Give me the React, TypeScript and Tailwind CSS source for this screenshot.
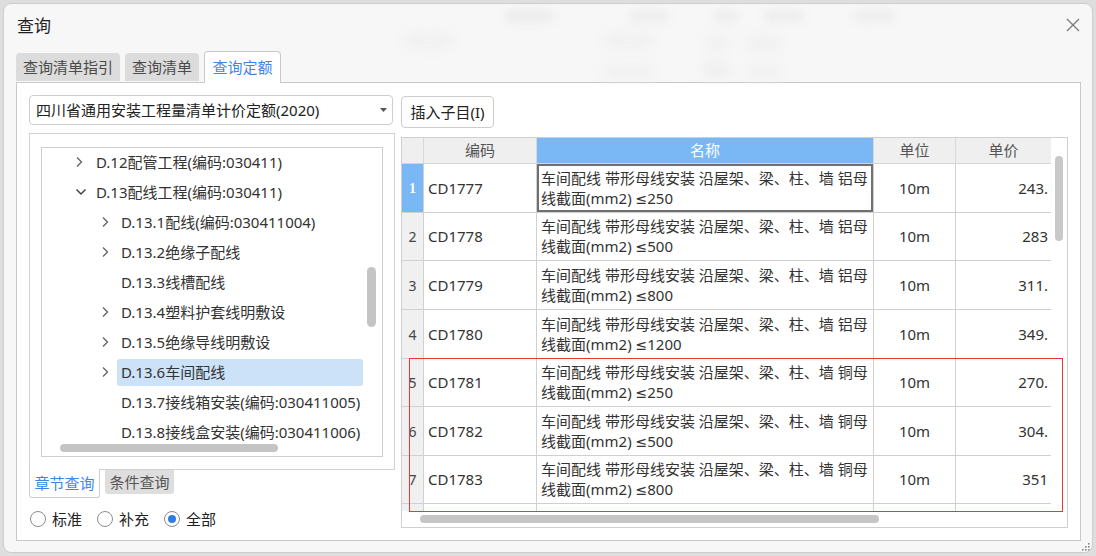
import React from "react";

const ChevronRight = () => (
  <svg width="8" height="12" viewBox="0 0 8 12">
    <path d="M2 1.5 L6.5 6 L2 10.5" fill="none" stroke="#666" strokeWidth="1.4" />
  </svg>
);
const ChevronDown = () => (
  <svg width="12" height="8" viewBox="0 0 12 8">
    <path d="M1.5 1.5 L6 6 L10.5 1.5" fill="none" stroke="#444" strokeWidth="1.5" />
  </svg>
);

type TreeItem = { label: string; level: 1 | 2; icon: "right" | "down" | "none"; selected?: boolean };

const tree: TreeItem[] = [
  { label: "D.12配管工程(编码:030411)", level: 1, icon: "right" },
  { label: "D.13配线工程(编码:030411)", level: 1, icon: "down" },
  { label: "D.13.1配线(编码:030411004)", level: 2, icon: "right" },
  { label: "D.13.2绝缘子配线", level: 2, icon: "right" },
  { label: "D.13.3线槽配线", level: 2, icon: "none" },
  { label: "D.13.4塑料护套线明敷设", level: 2, icon: "right" },
  { label: "D.13.5绝缘导线明敷设", level: 2, icon: "right" },
  { label: "D.13.6车间配线", level: 2, icon: "right", selected: true },
  { label: "D.13.7接线箱安装(编码:030411005)", level: 2, icon: "none" },
  { label: "D.13.8接线盒安装(编码:030411006)", level: 2, icon: "none" },
];

const rows = [
  { n: 1, code: "CD1777", metal: "铝母", sec: "250", price: "243.", h: "h-[49px]" },
  { n: 2, code: "CD1778", metal: "铝母", sec: "500", price: "283", h: "h-[48px]" },
  { n: 3, code: "CD1779", metal: "铝母", sec: "800", price: "311.", h: "h-[49px]" },
  { n: 4, code: "CD1780", metal: "铝母", sec: "1200", price: "349.", h: "h-[49px]" },
  { n: 5, code: "CD1781", metal: "铜母", sec: "250", price: "270.", h: "h-[48px]" },
  { n: 6, code: "CD1782", metal: "铜母", sec: "500", price: "304.", h: "h-[49px]" },
  { n: 7, code: "CD1783", metal: "铜母", sec: "800", price: "351", h: "h-[48px]" },
];

function Radio({ checked, label }: { checked?: boolean; label: string }) {
  return (
    <div className="flex items-center gap-[6px]">
      <div className="w-[16px] h-[16px] rounded-full border border-[#8c8c8c] bg-white flex items-center justify-center">
        {checked && <div className="w-[8px] h-[8px] rounded-full bg-[#2f7de1]" />}
      </div>
      <span className="text-[15px] leading-[18px] text-[#222]">{label}</span>
    </div>
  );
}

export default function App() {
  return (
    <div className="w-[1096px] h-[556px] bg-[#dedede] p-[3px] overflow-hidden font-['Noto_Sans','Noto_Sans_CJK_SC',sans-serif] text-[#333]">
      <div className="relative w-[1090px] h-[550px] rounded-[8px] border border-[#cdcdcd] bg-[#f7f7f7] flex flex-col overflow-hidden">
        {/* faint acrylic blobs */}
        <div className="absolute left-[500px] top-[6px] w-[50px] h-[12px] rounded-full bg-[#ececec] blur-[5px]" />
        <div className="absolute left-[625px] top-[6px] w-[40px] h-[12px] rounded-full bg-[#ededed] blur-[5px]" />
        <div className="absolute left-[710px] top-[6px] w-[25px] h-[12px] rounded-full bg-[#ededed] blur-[5px]" />
        <div className="absolute left-[760px] top-[6px] w-[40px] h-[12px] rounded-full bg-[#ededed] blur-[5px]" />
        <div className="absolute left-[850px] top-[6px] w-[40px] h-[12px] rounded-full bg-[#ededed] blur-[5px]" />
        <div className="absolute left-[400px] top-[30px] w-[50px] h-[14px] rounded-full bg-[#f0f0f0] blur-[6px]" />
        <div className="absolute left-[600px] top-[30px] w-[50px] h-[14px] rounded-full bg-[#f0f0f0] blur-[6px]" />
        <div className="absolute left-[700px] top-[32px] w-[25px] h-[14px] rounded-full bg-[#f0f0f0] blur-[6px]" />
        <div className="absolute left-[742px] top-[32px] w-[35px] h-[14px] rounded-full bg-[#f0f0f0] blur-[6px]" />
        <div className="absolute left-[600px] top-[62px] w-[50px] h-[12px] rounded-full bg-[#f0f0f0] blur-[6px]" />
        <div className="absolute left-[700px] top-[58px] w-[25px] h-[16px] rounded-full bg-[#eeeeee] blur-[6px]" />
        <div className="absolute left-[742px] top-[62px] w-[35px] h-[12px] rounded-full bg-[#f0f0f0] blur-[6px]" />

        {/* title bar */}
        <div className="relative h-[47px] flex items-center justify-between pl-[13px] pr-[11px] shrink-0">
          <span className="text-[17px] leading-[20px] text-[#1f1f1f] -mt-[3px]">查询</span>
          <svg width="16" height="16" viewBox="0 0 16 16" className="-mt-[6px]">
            <path d="M2 2 L14 14 M14 2 L2 14" stroke="#7a7a7a" strokeWidth="1.3" />
          </svg>
        </div>

        {/* tabs */}
        <div className="relative z-10 h-[31px] ml-[12px] flex items-end gap-[5px] shrink-0">
          <div className="h-[28px] mb-[1px] w-[104px] rounded-t-[4px] bg-[#dcdcdc] flex items-center justify-center text-[15px] text-[#4a4a4a]">
            查询清单指引
          </div>
          <div className="h-[28px] mb-[1px] w-[74px] rounded-t-[4px] bg-[#dcdcdc] flex items-center justify-center text-[15px] text-[#4a4a4a]">
            查询清单
          </div>
          <div className="h-[32px] -mb-[1px] w-[77px] rounded-t-[4px] bg-white border border-b-0 border-[#c9c9c9] flex items-center justify-center text-[15px] text-[#3a87e6]">
            查询定额
          </div>
        </div>

        {/* panel */}
        <div className="ml-[12px] w-[1065px] h-[459px] border border-[#c9c9c9] bg-white flex pl-[12px] pr-[12px] pt-[12px] gap-[6px]">
          {/* left column */}
          <div className="w-[366px] flex flex-col">
            <div className="h-[30px] w-[364px] rounded-[4px] border border-[#cdcdcd] bg-white flex items-center justify-between pl-[6px] pr-[5px]">
              <span className="text-[15px] text-[#222] leading-[18px]">四川省通用安装工程量清单计价定额(2020)</span>
              <svg width="7" height="5" viewBox="0 0 7 5">
                <path d="M0 0 L7 0 L3.5 4 Z" fill="#555" />
              </svg>
            </div>
            <div className="mt-[8px] h-[337px] w-[366px] border border-[#d2d2d2] bg-white pl-[11px] pr-[11px] pt-[13px]">
              <div className="relative h-[310px] border border-[#cfcfcf] overflow-hidden">
                {tree.map((t, i) => (
                  <div
                    key={i}
                    className={`h-[30px] flex items-center ${t.level === 1 ? "pl-[33px]" : "pl-[59px]"} ${i === 0 ? "-mt-px" : ""}`}
                  >
                    <div className="w-[16px] flex items-center">
                      {t.icon === "right" && <ChevronRight />}
                      {t.icon === "down" && <ChevronDown />}
                    </div>
                    <div
                      className={`h-[27px] flex items-center pl-[4px] rounded-[3px] whitespace-nowrap text-[15px] text-[#333] ${
                        t.selected ? "w-[246px] bg-[#cce2f8]" : ""
                      } ${t.level === 1 ? "ml-[1px]" : ""}`}
                    >
                      {t.label}
                    </div>
                  </div>
                ))}
                <div className="absolute left-[325px] top-[119px] w-[9px] h-[60px] rounded-full bg-[#c4c4c4]" />
                <div className="absolute left-[18px] top-[296px] w-[218px] h-[8px] rounded-full bg-[#c4c4c4]" />
              </div>
            </div>
            {/* bottom tabs */}
            <div className="flex items-start gap-[5px] -mt-[1px]">
              <div className="h-[29px] w-[71px] bg-white border border-t-0 border-[#cdcdcd] rounded-b-[3px] flex items-center justify-center text-[15px] text-[#3a87e6]">
                章节查询
              </div>
              <div className="h-[24px] mt-[1px] w-[69px] bg-[#dedede] rounded-b-[3px] flex items-center justify-center text-[15px] text-[#555]">
                条件查询
              </div>
            </div>
            <div className="mt-[12px] flex items-center gap-[15px] pl-[1px]">
              <Radio label="标准" />
              <Radio label="补充" />
              <Radio label="全部" checked />
            </div>
          </div>

          {/* right column */}
          <div className="w-[667px] flex flex-col">
            <div className="mt-[1px] h-[32px] w-[93px] rounded-[4px] border border-[#cdcdcd] bg-white flex items-center justify-center text-[15px] text-[#222]">
              插入子目(I)
            </div>
            <div className="relative mt-[9px] h-[391px] border border-[#cfcfcf] bg-white">
              <div className="w-[649px] h-full overflow-hidden">
                {/* header */}
                <div className="flex h-[26px] bg-[#efefef] border-b border-[#d4d4d4] text-[15px]">
                  <div className="w-[22px] border-r border-[#d8d8d8]" />
                  <div className="w-[113px] border-r border-[#d8d8d8] flex items-center justify-center text-[#555]">编码</div>
                  <div className="w-[337px] border-r border-[#d8d8d8] bg-[#7ab7f5] flex items-center justify-center text-white">名称</div>
                  <div className="w-[82px] border-r border-[#d8d8d8] flex items-center justify-center text-[#555]">单位</div>
                  <div className="w-[95px] flex items-center justify-center text-[#555]">单价</div>
                </div>
                {rows.map((r) => (
                  <div key={r.n} className={`flex ${r.h} border-b border-[#d0d0d0] text-[15px]`}>
                    <div
                      className={`w-[22px] border-r border-[#d0d0d0] flex items-center justify-center ${
                        r.n === 1 ? "bg-[#7ab7f5] text-white font-['Liberation_Serif',serif] font-bold text-[14px]" : "bg-[#f0f0f0] text-[#444] text-[14px]"
                      }`}
                    >
                      {r.n}
                    </div>
                    <div className="w-[113px] border-r border-[#d0d0d0] flex items-center pl-[4px] text-[#333]">{r.code}</div>
                    <div
                      className={`w-[337px] border-r border-[#d0d0d0] flex items-center pl-[4px] leading-[20px] text-[#333] ${
                        r.n === 1 ? "ring-2 ring-inset ring-[#707070]" : ""
                      }`}
                    >
                      <div className="whitespace-nowrap">
                        车间配线 带形母线安装 沿屋架、梁、柱、墙 {r.metal}
                        <br />
                        线截面(mm2) <span className="font-['DejaVu_Sans',sans-serif] text-[14px]">≤</span>{r.sec}
                      </div>
                    </div>
                    <div className="w-[82px] border-r border-[#d0d0d0] flex items-center justify-center text-[#333]">10m</div>
                    <div className="w-[95px] flex items-center justify-end pr-[3px] text-[#333]">{r.price}</div>
                  </div>
                ))}
                <div className="flex h-[7px]">
                  <div className="w-[22px] border-r border-[#d0d0d0] bg-[#f0f0f0]" />
                  <div className="w-[113px] border-r border-[#d0d0d0]" />
                  <div className="w-[337px] border-r border-[#d0d0d0]" />
                  <div className="w-[82px] border-r border-[#d0d0d0]" />
                </div>
              </div>
              {/* scrollbars */}
              <div className="absolute left-[653px] top-[18px] w-[8px] h-[85px] rounded-full bg-[#c8c8c8]" />
              <div className="absolute left-[18px] top-[377px] w-[459px] h-[8px] rounded-full bg-[#c6c6c6]" />
              {/* red highlight */}
              <div className="absolute left-[7px] top-[220px] w-[654px] h-[154px] border border-[#ee3535]" />
            </div>
          </div>
        </div>

        {/* resize grip */}
        <svg width="9" height="9" viewBox="0 0 9 9" className="absolute right-[2px] bottom-[1px]">
          <rect x="7" y="1" width="1.6" height="1.6" fill="#8a8a8a" />
          <rect x="4" y="4" width="1.6" height="1.6" fill="#8a8a8a" />
          <rect x="7" y="4" width="1.6" height="1.6" fill="#8a8a8a" />
          <rect x="1" y="7" width="1.6" height="1.6" fill="#8a8a8a" />
          <rect x="4" y="7" width="1.6" height="1.6" fill="#8a8a8a" />
          <rect x="7" y="7" width="1.6" height="1.6" fill="#8a8a8a" />
        </svg>
      </div>
    </div>
  );
}
